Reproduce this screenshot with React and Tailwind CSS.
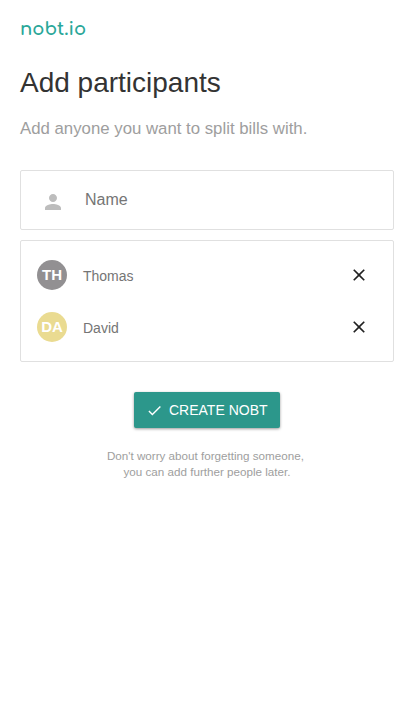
import React from "react";

const participants = [
  { name: "Thomas", initials: "TH", color: "bg-[#929092]" },
  { name: "David", initials: "DA", color: "bg-[#eadb91]" },
];

function Icon({ path, className }) {
  return (
    <svg viewBox="0 0 24 24" fill="currentColor" className={className} aria-hidden="true">
      <path d={path} />
    </svg>
  );
}

const PERSON =
  "M12 12c2.21 0 4-1.79 4-4s-1.79-4-4-4-4 1.79-4 4 1.79 4 4 4zm0 2c-2.67 0-8 1.34-8 4v2h16v-2c0-2.66-5.33-4-8-4z";
const CLOSE =
  "M19 6.41L17.59 5 12 10.59 6.41 5 5 6.41 10.59 12 5 17.59 6.41 19 12 13.41 17.59 19 19 17.59 13.41 12z";
const CHECK = "M9 16.17L4.83 12l-1.42 1.41L9 19 21 7l-1.41-1.41z";

function Participant({ name, initials, color }) {
  return (
    <li className="flex h-[52px] items-center pr-6 pl-4">
      <span
        className={`flex size-[30px] items-center justify-center rounded-full text-[15px] font-bold text-white ${color}`}
      >
        {initials}
      </span>
      <span className="ml-4 flex-1 pt-0.5 text-sm text-[#757575]">{name}</span>
      <button type="button" aria-label={`Remove ${name}`}>
        <Icon path={CLOSE} className="size-5 text-[#212121]" />
      </button>
    </li>
  );
}

export default function App() {
  return (
    <main className="min-h-screen bg-white px-5 pt-[17px] font-['Liberation_Sans',Arial,sans-serif]">
      <header className="h-6 font-['Comfortaa','Quicksand','Lato',sans-serif] text-[18px] leading-6 font-bold text-[#2aa799]">
        nobt.io
      </header>
      <h1 className="mt-[26px] text-[28px] leading-8 text-[#333]">Add participants</h1>
      <p className="mt-5 text-[16.8px] leading-5 text-[#9e9e9e]">Add anyone you want to split bills with.</p>

      <label className="mt-[31px] flex h-[60px] items-center rounded-xs border border-[#e0e0e0] pl-5">
        <Icon path={PERSON} className="mt-1 size-6 text-[#bdbdbd]" />
        <input
          placeholder="Name"
          className="ml-5 w-60 text-base text-[#757575] outline-none placeholder:text-[#757575]"
        />
      </label>

      <ul className="mt-2.5 h-[122px] rounded-xs border border-[#e0e0e0] pt-2">
        {participants.map((p) => (
          <Participant key={p.name} {...p} />
        ))}
      </ul>

      <div className="mt-[30px] flex justify-center">
        <button
          type="button"
          className="flex h-9 w-[146px] items-center rounded-xs bg-[#2c978b] pl-3 text-sm text-white shadow-[0_1px_3px_rgba(0,0,0,0.4)]"
        >
          <Icon path={CHECK} className="mr-1.5 size-[17px]" />
          CREATE NOBT
        </button>
      </div>
      <p className="mt-5 text-center text-[11.65px] leading-4 text-[#9e9e9e]">
        Don't worry about forgetting someone,&nbsp;
        <br />
        you can add further people later.
      </p>
    </main>
  );
}
